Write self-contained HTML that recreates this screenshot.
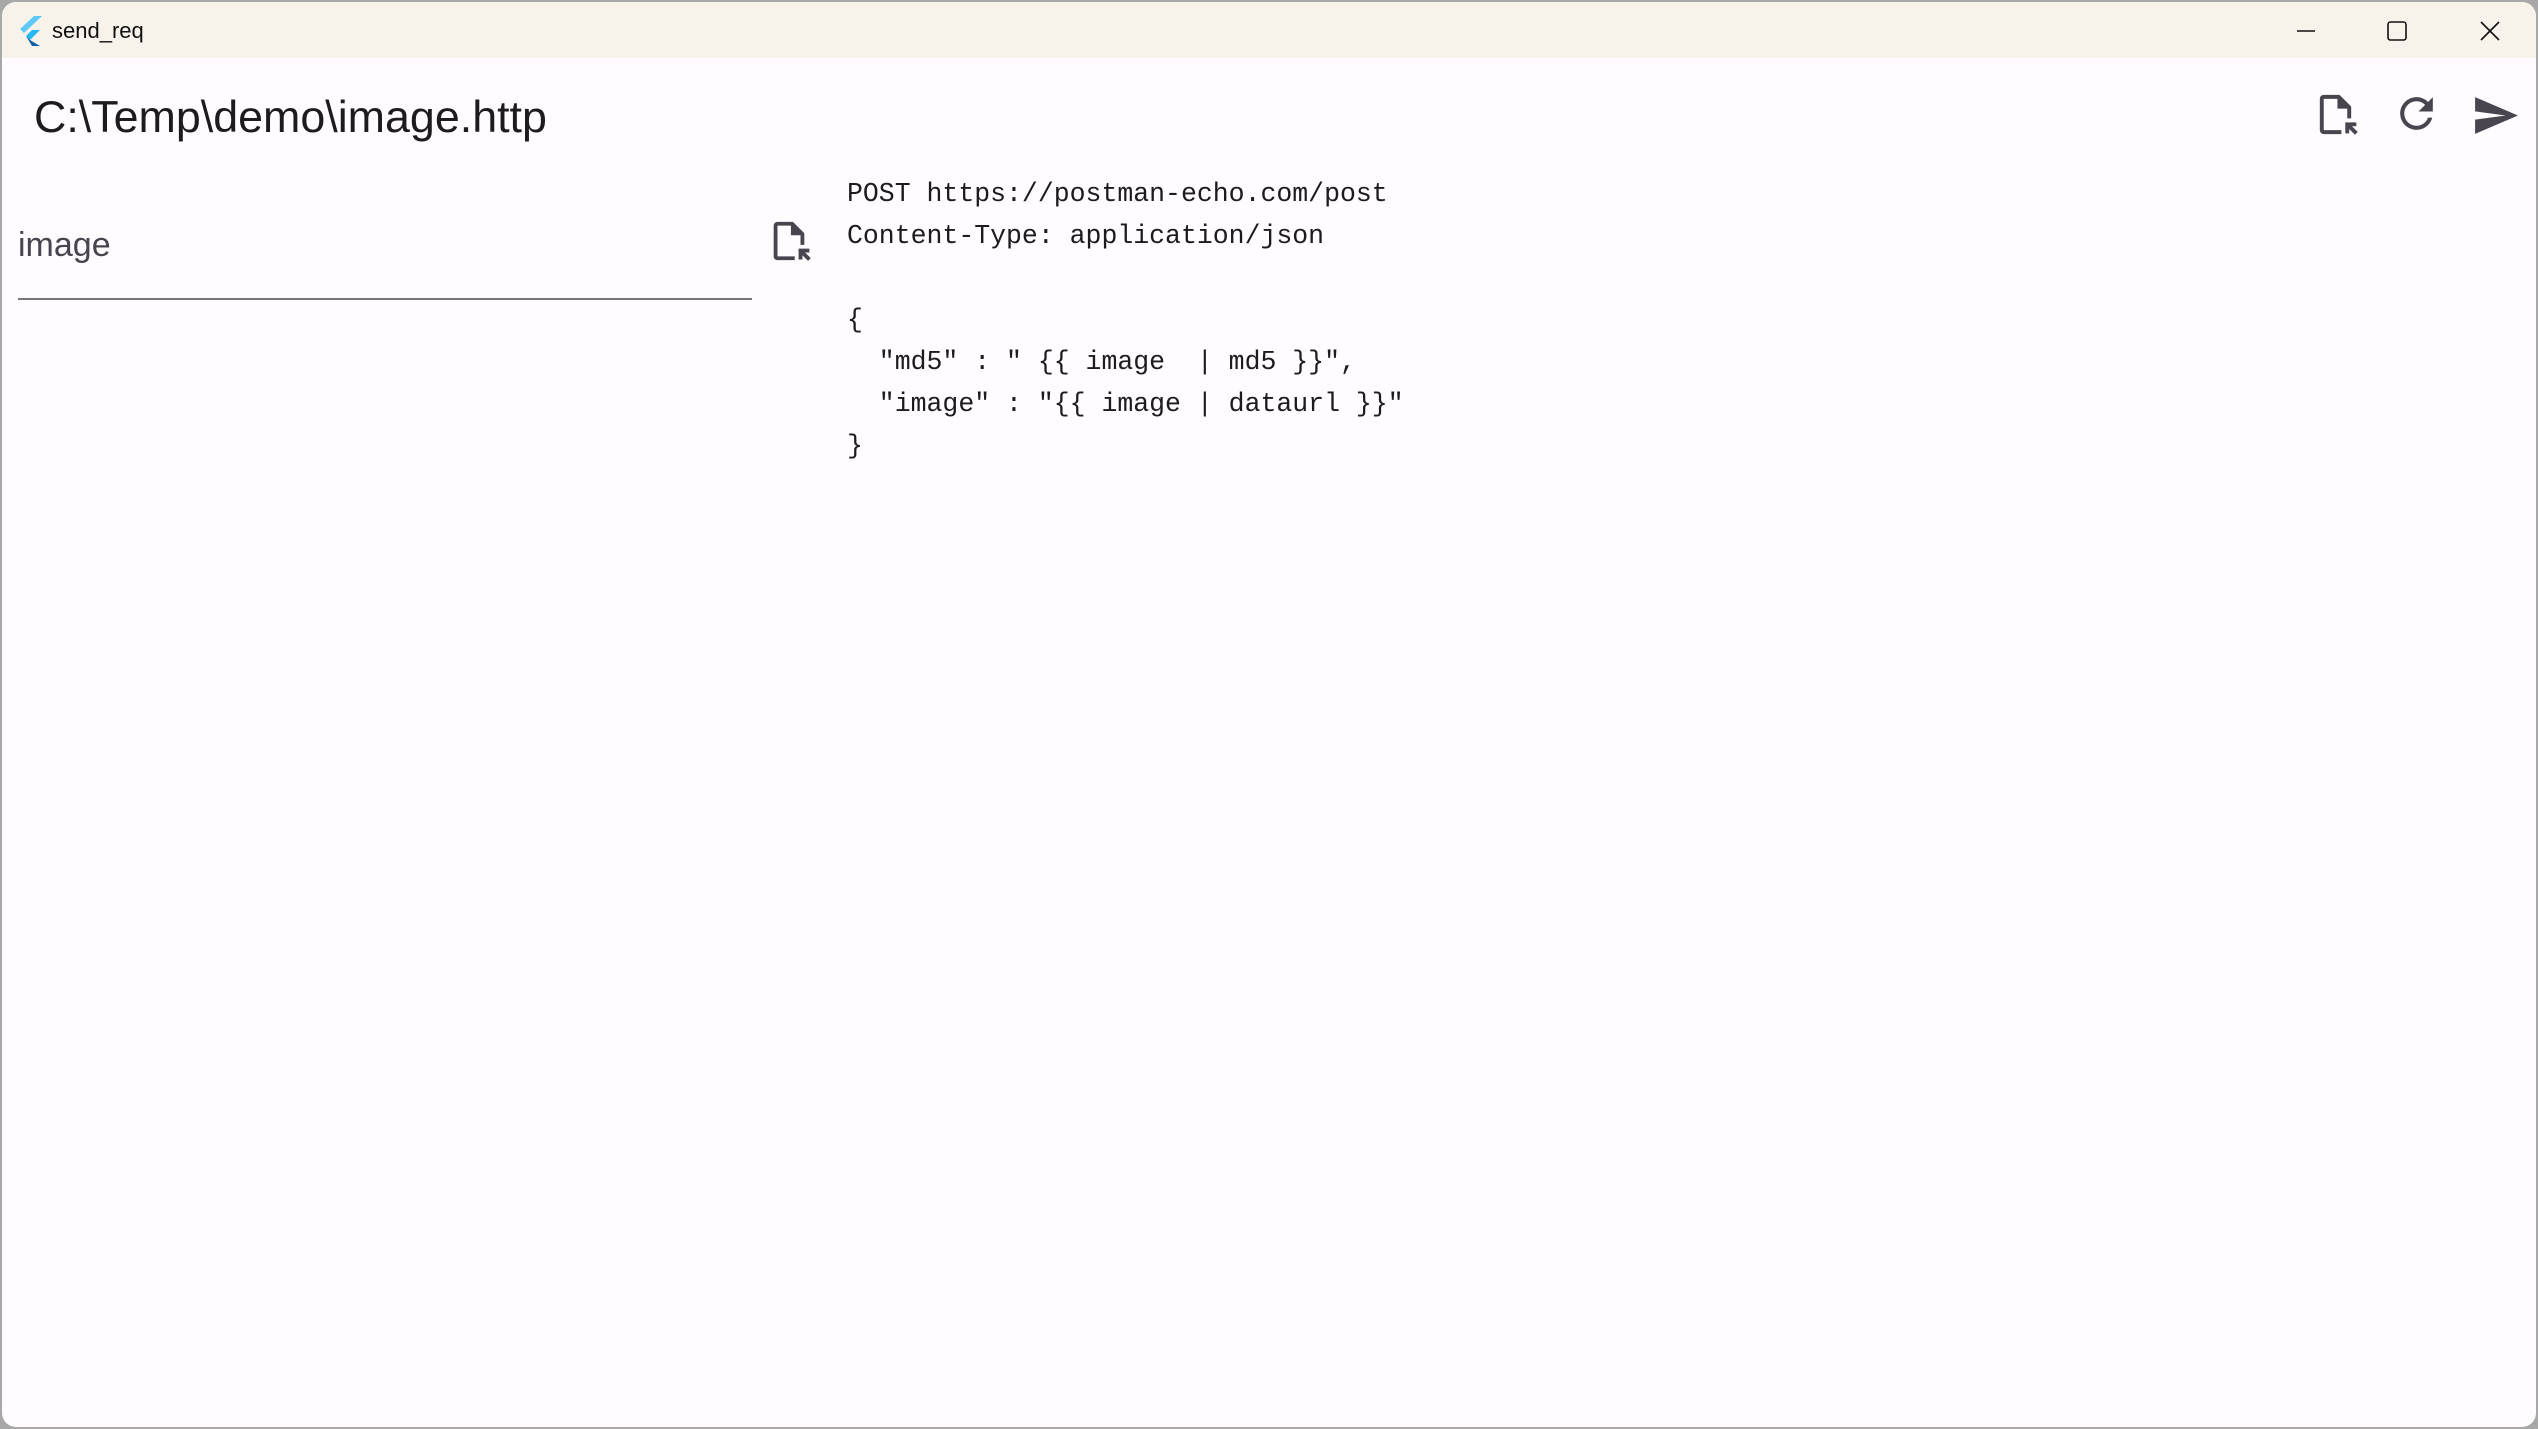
<!DOCTYPE html>
<html><head><meta charset="utf-8"><style>
html,body{margin:0;padding:0;width:2538px;height:1429px;overflow:hidden;background:#a8a8a8;}
#win{position:absolute;left:2px;top:2px;width:2534px;height:1425px;background:#fffbfe;border-radius:14px;overflow:hidden;}
#tb{position:absolute;left:0;top:0;width:100%;height:56px;background:#f8f3ea;}
#tb .t{position:absolute;left:50px;top:16px;font:22px "Liberation Sans",sans-serif;color:#111;}
.abs{position:absolute;}
#path{left:32px;top:90px;font:44.8px "Liberation Sans",sans-serif;color:#1d1b20;}
#lbl{left:16px;top:224px;font:34px "Liberation Sans",sans-serif;color:#49454f;}
#line{left:16px;top:296px;width:734px;height:2px;background:#79747e;}
#code{left:845px;top:171px;font:26.5px/42px "Liberation Mono",monospace;color:#1d1b20;white-space:pre;margin:0;}
svg{position:absolute;}
</style></head><body>
<div id="win">
<div id="tb">
<svg style="left:16px;top:14px" width="26" height="30" viewBox="0 0 26 30"><polygon points="16,0 24,0 6,17 2,13" fill="#5ec8f8"/><polygon points="14,14 22,14 12,24 8,20" fill="#29b6f6"/><polygon points="8,20 12,24 22,30 14,30" fill="#0a5fa8"/></svg>
<div class="t">send_req</div>
<svg style="left:2293px;top:18px" width="22" height="22" viewBox="0 0 22 22"><line x1="2" y1="11" x2="20" y2="11" stroke="#111" stroke-width="1.6"/></svg>
<svg style="left:2384px;top:18px" width="22" height="22" viewBox="0 0 22 22"><rect x="2" y="2" width="18" height="18" rx="2.5" fill="none" stroke="#111" stroke-width="1.6"/></svg>
<svg style="left:2477px;top:18px" width="22" height="22" viewBox="0 0 22 22"><path d="M2 2L20 20M20 2L2 20" stroke="#111" stroke-width="1.6"/></svg>
</div>
<div id="path" class="abs">C:\Temp\demo\image.http</div>
<svg style="left:2310px;top:89px" width="47" height="47" viewBox="0 0 24 24"><path fill="#49454f" d="M15 22H6c-1.1 0-2-.9-2-2V4c0-1.1.9-2 2-2h8l6 6v6h-2V9h-5V4H6v16h9v2zm4-.34v-2.24l2.95 2.95 1.41-1.41L20.41 18h2.24v-2H17v5.66h2z"/><path fill="#49454f" d="M14 2v6h6z"/></svg>
<svg style="left:2390px;top:87px" width="49" height="49" viewBox="0 0 24 24"><path fill="#49454f" d="M17.65 6.35A7.958 7.958 0 0 0 12 4c-4.42 0-7.99 3.58-7.99 8s3.57 8 7.99 8c3.73 0 6.84-2.55 7.73-6h-2.08A5.99 5.99 0 0 1 12 18c-3.31 0-6-2.69-6-6s2.69-6 6-6c1.66 0 3.14.69 4.22 1.78L13 11h7V4l-2.35 2.35z"/></svg>
<svg style="left:2469px;top:89px" width="49" height="49" viewBox="0 0 24 24"><path fill="#49454f" d="M2.01 21L23 12 2.01 3 2 10l15 2-15 2z"/></svg>
<div id="lbl" class="abs">image</div>
<div id="line" class="abs"></div>
<svg style="left:764px;top:216px" width="46" height="46" viewBox="0 0 24 24"><path fill="#49454f" d="M15 22H6c-1.1 0-2-.9-2-2V4c0-1.1.9-2 2-2h8l6 6v6h-2V9h-5V4H6v16h9v2zm4-.34v-2.24l2.95 2.95 1.41-1.41L20.41 18h2.24v-2H17v5.66h2z"/><path fill="#49454f" d="M14 2v6h6z"/></svg>
<pre id="code" class="abs">POST https://postman-echo.com/post
Content-Type: application/json

{
  "md5" : " {{ image  | md5 }}",
  "image" : "{{ image | dataurl }}"
}</pre>
</div>
</body></html>
